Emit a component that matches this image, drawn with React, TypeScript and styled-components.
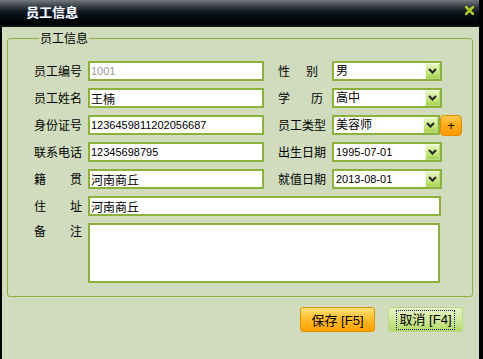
import React from "react";
import styled, { createGlobalStyle, css } from "styled-components";

const Global = createGlobalStyle`
  html, body { margin: 0; padding: 0; background: #000; }
  body { font-family: "Noto Sans CJK SC", sans-serif; }
  * { box-sizing: border-box; }
`;

const Window = styled.div`
  width: 479px;
  height: 359px;
  display: flex;
  flex-direction: column;
`;

const TitleBar = styled.div`
  height: 27px;
  flex: none;
  display: flex;
  align-items: center;
  justify-content: space-between;
  padding: 0 5px 2px 26px;
  border-bottom: 2px solid #101010;
  background: linear-gradient(#74787f 0%, #40464e 22%, #0e1620 48%, #03070b 75%, #000 100%);
`;

const Title = styled.span`
  color: #fff;
  font-size: 13px;
  font-weight: bold;
  line-height: 16px;
  text-shadow: 1px 0 0 rgba(90, 120, 200, 0.55);
`;

const Close = styled.svg`
  width: 9px;
  height: 9px;
  display: block;
  margin-top: -2px;
`;

const Body = styled.div`
  flex: 1;
  background: #d0dcbd;
  border-left: 2px solid #000;
  padding: 4px 6px 0 5px;
`;

const Group = styled.fieldset`
  margin: 0;
  padding: 0 30px 13px 26px;
  border: 1px solid #8ab43c;
  border-radius: 3px;
  min-width: 0;
`;

const Legend = styled.legend`
  margin-left: 5px;
  padding: 0 1px;
  font-size: 12px;
  line-height: 14px;
  color: #000;
`;

const FormGrid = styled.div`
  display: grid;
  grid-template-columns: 54px 190px 54px 110px;
  grid-template-rows: repeat(6, 20px) 60px;
  row-gap: 7px;
  padding-top: 16px;
`;

const Label = styled.label<{ $w?: number; $tall?: boolean }>`
  width: ${(p) => p.$w ?? 48}px;
  font-size: 12px;
  line-height: ${(p) => (p.$tall ? "16px" : "20px")};
  color: #000;
  text-align: justify;
  text-align-last: justify;
  white-space: nowrap;
  align-self: start;
`;

const fieldBox = css`
  height: 20px;
  border: 2px solid #8cb23c;
  background: #fff;
  color: #000;
  outline: none;
`;

const TextInput = styled.input<{ $num?: boolean; $muted?: boolean; $span?: boolean }>`
  ${fieldBox};
  width: ${(p) => (p.$span ? "353px" : "176px")};
  padding: 0 1px;
  font-family: "Liberation Sans", "Noto Sans CJK SC", sans-serif;
  font-size: ${(p) => (p.$num ? "11px" : "12px")};
  color: ${(p) => (p.$muted ? "#9a9a9a" : "#000")};
  ${(p) => p.$span && "grid-column: 2 / span 3;"}
`;

const Memo = styled.textarea`
  ${fieldBox};
  grid-column: 2 / span 3;
  width: 352px;
  height: 60px;
  resize: none;
  font-family: "Noto Sans CJK SC", sans-serif;
  font-size: 12px;
`;

const SelectRow = styled.div`
  display: flex;
  align-items: center;
  width: 130px;
`;

const Select = styled.div<{ $w?: number }>`
  ${fieldBox};
  flex: none;
  width: ${(p) => p.$w ?? 110}px;
  display: flex;
  align-items: center;
  justify-content: space-between;
  padding: 0 0 0 2px;
  font-family: "Liberation Sans", "Noto Sans CJK SC", sans-serif;
`;

const SelectValue = styled.span<{ $num?: boolean }>`
  font-size: ${(p) => (p.$num ? "11px" : "12px")};
  line-height: 16px;
  white-space: nowrap;
`;

const ArrowBtn = styled.span`
  width: 15px;
  height: 16px;
  flex: none;
  display: flex;
  align-items: center;
  justify-content: center;
  border: 1px solid #b9d98a;
  border-top-color: #f4fbe4;
  border-left-color: #f4fbe4;
  background: linear-gradient(#e9f6c4 0%, #cdea8c 50%, #a8d44c 100%);
`;

const AddBtn = styled.button`
  flex: none;
  width: 22px;
  height: 21px;
  padding: 0;
  border: 1px solid #e88a00;
  border-radius: 4px;
  background: linear-gradient(#ffc94a 0%, #ffab18 50%, #ff9800 100%);
  font-family: "Liberation Sans", sans-serif;
  font-size: 13px;
  line-height: 17px;
  color: #000;
`;

const Actions = styled.div`
  display: flex;
  justify-content: flex-end;
  gap: 13px;
  padding: 10px 10px 0 0;
`;

const Btn = styled.button<{ $primary?: boolean }>`
  width: 75px;
  height: 25px;
  padding: 0;
  border-radius: 3px;
  font-family: "Liberation Sans", "Noto Sans CJK SC", sans-serif;
  font-size: 13px;
  color: #000;
  display: flex;
  align-items: center;
  justify-content: center;
  ${(p) =>
    p.$primary
      ? css`
          border: 1px solid #e39200;
          background: linear-gradient(#ffe07a 0%, #ffbf2e 45%, #ffa000 100%);
        `
      : css`
          border: 1px solid #b9d987;
          background: linear-gradient(#e7f4c6 0%, #cfe99a 50%, #b5d968 100%);
        `}
`;

const FocusText = styled.span`
  outline: 1px dotted #1a1a80;
  outline-offset: 1px;
  padding: 0 1px;
  line-height: 16px;
`;

const Chevron = () => (
  <svg width="9" height="6" viewBox="0 0 9 6">
    <path d="M1 1 L4.5 4.5 L8 1" fill="none" stroke="#2a2a2a" strokeWidth="2.2" />
  </svg>
);

function Combo({ value, num, w }: { value: string; num?: boolean; w?: number }) {
  return (
    <Select $w={w}>
      <SelectValue $num={num}>{value}</SelectValue>
      <ArrowBtn>
        <Chevron />
      </ArrowBtn>
    </Select>
  );
}

export default function App() {
  return (
    <>
      <Global />
      <Window>
        <TitleBar>
          <Title>员工信息</Title>
          <Close viewBox="0 0 9 9">
            <path d="M1 1 L8 8 M8 1 L1 8" stroke="#a6d02c" strokeWidth="2.6" strokeLinecap="square" />
          </Close>
        </TitleBar>
        <Body>
          <Group>
            <Legend>员工信息</Legend>
            <FormGrid>
              <Label>员工编号</Label>
              <TextInput $num $muted readOnly defaultValue="1001" />
              <Label $w={40}>性别</Label>
              <Combo value="男" />

              <Label>员工姓名</Label>
              <TextInput defaultValue="王楠" />
              <Label $w={45}>学历</Label>
              <Combo value="高中" />

              <Label>身份证号</Label>
              <TextInput $num defaultValue="1236459811202056687" />
              <Label>员工类型</Label>
              <SelectRow>
                <Combo value="美容师" w={108} />
                <AddBtn>+</AddBtn>
              </SelectRow>

              <Label>联系电话</Label>
              <TextInput $num defaultValue="12345698795" />
              <Label>出生日期</Label>
              <Combo value="1995-07-01" num />

              <Label>籍贯</Label>
              <TextInput defaultValue="河南商丘" />
              <Label>就值日期</Label>
              <Combo value="2013-08-01" num />

              <Label>住址</Label>
              <TextInput $span defaultValue="河南商丘" />

              <Label $tall>备注</Label>
              <Memo />
            </FormGrid>
          </Group>
          <Actions>
            <Btn $primary>保存 [F5]</Btn>
            <Btn>
              <FocusText>取消 [F4]</FocusText>
            </Btn>
          </Actions>
        </Body>
      </Window>
    </>
  );
}
